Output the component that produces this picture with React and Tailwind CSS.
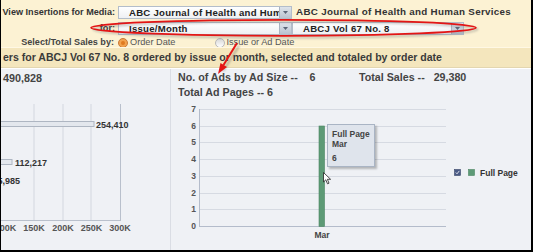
import React from "react";

function Arrow() {
  return (
    <div className="w-[12px] h-full bg-gradient-to-b from-[#dfe4eb] to-[#b9c3d0] border-l border-[#a9b3c1] flex items-center justify-center">
      <svg width="5" height="3" viewBox="0 0 5 3">
        <path d="M0 0 H5 L2.5 3 Z" fill="#5a6577" />
      </svg>
    </div>
  );
}

function Dropdown({ text, w }) {
  return (
    <div className={`${w} h-[13px] flex border border-[#b3bdca] bg-gradient-to-b from-white to-[#eef0f3] shrink-0`}>
      <div className="flex-1 overflow-hidden whitespace-nowrap pl-[10px] text-[9.6px] tracking-[0.25px] leading-[11px] font-bold text-[#222]">
        {text}
      </div>
      <Arrow />
    </div>
  );
}

export default function App() {
  return (
    <div className="relative w-[533px] h-[252px] overflow-hidden border-l border-r-2 border-b-2 border-black bg-[#eff1f5] flex flex-col font-['Liberation_Sans',Arial,sans-serif]">
      {/* header */}
      <div className="h-[47px] bg-[#fcf2d3] pt-[6px] flex flex-col">
        <div className="flex items-center h-[13px]">
          <div className="w-[114px] text-right text-[9.1px] font-bold text-[#333] whitespace-nowrap">View Insertions for Media:</div>
          <div className="ml-[3px]"><Dropdown text="ABC Journal of Health and Human Services" w="w-[174px]" /></div>
          <div className="ml-[4px] text-[9.8px] tracking-[0.3px] font-bold text-[#333] whitespace-nowrap">ABC Journal of Health and Human Services</div>
        </div>
        <div className="flex items-center h-[13px] mt-[3px]">
          <div className="w-[114px] text-right text-[9.1px] font-bold text-[#333]">for:</div>
          <div className="ml-[3px]"><Dropdown text="Issue/Month" w="w-[174px]" /></div>
          <div className="ml-[0px]"><Dropdown text="ABCJ Vol 67 No. 8" w="w-[172px]" /></div>
        </div>
        <div className="flex items-center h-[11px] mt-[2px]">
          <div className="w-[113px] text-right text-[9.1px] font-bold text-[#444] whitespace-nowrap">Select/Total Sales by:</div>
          <div className="ml-[4px] w-[10px] h-[10px] rounded-full bg-[#f2a24e] border border-[#c9793a] flex items-center justify-center">
            <div className="w-[4px] h-[4px] rounded-full bg-[#e07a20]" />
          </div>
          <div className="ml-[2px] text-[9.2px] text-[#555] whitespace-nowrap">Order Date</div>
          <div className="ml-[40px] w-[10px] h-[10px] rounded-full bg-gradient-to-b from-[#d8d8d8] to-white border border-[#b8b8b8]" />
          <div className="ml-[1px] text-[9.2px] text-[#555] whitespace-nowrap">Issue or Ad Date</div>
        </div>
      </div>
      {/* banner */}
      <div className="h-[22px] bg-[#f4e6bd] border-t border-[#fff8e4] border-b border-b-[#e3d6b0] flex items-center pl-[2px]">
        <div className="text-[10.55px] font-bold text-[#3a3a3a] whitespace-nowrap">ers for ABCJ Vol 67 No. 8 ordered by issue or month, selected and totaled by order date</div>
      </div>
      {/* panels */}
      <div className="flex-1 flex border-t border-white">
        {/* left panel */}
        <div className="w-[170px] border-r border-[#dadde4] flex flex-col">
          <div className="pl-[2px] pt-[2px] h-[31px] text-[10.8px] font-bold text-[#444] leading-[15px]">490,828</div>
          <svg width="170" height="150" className="block overflow-hidden">
            <line x1="33" y1="4" x2="33" y2="120" stroke="#d3d7df" />
            <line x1="62" y1="4" x2="62" y2="120" stroke="#d3d7df" />
            <line x1="90" y1="4" x2="90" y2="120" stroke="#d3d7df" />
            <line x1="119.5" y1="4" x2="119.5" y2="120" stroke="#b9c0cc" />
            <line x1="0" y1="120.5" x2="120" y2="120.5" stroke="#b9c0cc" />
            <rect x="-2" y="21.5" width="95" height="5" fill="#e3e7ed" stroke="#aeb6c2" />
            <text x="95" y="27.5" fontSize="9" fontWeight="bold" fill="#333">254,410</text>
            <rect x="-2" y="59.5" width="13" height="5" fill="#e3e7ed" stroke="#aeb6c2" />
            <text x="14" y="65.5" fontSize="9" fontWeight="bold" fill="#333">112,217</text>
            <text x="-3.5" y="84" fontSize="9" fontWeight="bold" fill="#333">5,985</text>
            <g fontSize="9" fontWeight="bold" fill="#555" textAnchor="middle">
              <text x="4.5" y="130.5">100K</text>
              <text x="33" y="130.5">150K</text>
              <text x="62" y="130.5">200K</text>
              <text x="90.5" y="130.5">250K</text>
              <text x="119" y="130.5">300K</text>
            </g>
          </svg>
        </div>
        {/* right panel */}
        <div className="relative flex-1 flex flex-col">
          <div className="pl-[7px] pt-[1px] h-[31px] text-[10.7px] font-bold text-[#444] leading-[15px]">
            <div className="flex">
              <span className="whitespace-pre w-[181px]">No. of Ads by Ad Size --    6</span>
              <span className="whitespace-pre">Total Sales --   29,380</span>
            </div>
            <div>Total Ad Pages -- 6</div>
          </div>
          <svg width="359" height="150" className="block">
            <g stroke="#d6dae2">
              <line x1="28" y1="9.5" x2="275" y2="9.5" />
              <line x1="28" y1="26.5" x2="275" y2="26.5" />
              <line x1="28" y1="42.5" x2="275" y2="42.5" />
              <line x1="28" y1="59.5" x2="275" y2="59.5" />
              <line x1="28" y1="76.5" x2="275" y2="76.5" />
              <line x1="28" y1="93.5" x2="275" y2="93.5" />
              <line x1="28" y1="109.5" x2="275" y2="109.5" />
            </g>
            <line x1="28" y1="126.5" x2="275" y2="126.5" stroke="#b4bccb" />
            <line x1="28.5" y1="9" x2="28.5" y2="127" stroke="#b4bccb" />
            <g fontSize="8.5" fontWeight="bold" fill="#555" textAnchor="end">
              <text x="25" y="12">7</text>
              <text x="25" y="29">6</text>
              <text x="25" y="45">5</text>
              <text x="25" y="62">4</text>
              <text x="25" y="79">3</text>
              <text x="25" y="96">2</text>
              <text x="25" y="112">1</text>
              <text x="25" y="129">0</text>
            </g>
            <rect x="148" y="26" width="5.5" height="100.5" fill="#5d9a76" stroke="#4c8563" strokeWidth="0.6" />
            <text x="151" y="137.5" fontSize="8.5" fontWeight="bold" fill="#444" textAnchor="middle">Mar</text>
            <rect x="283.5" y="69.5" width="6" height="6" fill="#4a5a86" stroke="#3a4668" strokeWidth="0.6" />
            <path d="M284.8 72.5 L286 73.8 L288.3 70.9" stroke="#fff" strokeWidth="0.8" fill="none" />
            <rect x="297.5" y="69.5" width="6" height="6" fill="#5d9a76" stroke="#4c8563" strokeWidth="0.6" />
            <text x="309" y="75.5" fontSize="8.5" fontWeight="bold" fill="#333">Full Page</text>
          </svg>
          {/* tooltip */}
          <div className="absolute left-[156px] top-[55px] w-[48px] h-[43px] bg-[#dfe4ec] border border-[#a9b4c4] shadow-[2px_2px_2px_rgba(0,0,0,0.25)] pl-[4px] pt-[4px] text-[8.5px] font-bold text-[#444] leading-[10px]">
            <div>Full Page</div>
            <div>Mar</div>
            <div className="mt-[4px]">6</div>
          </div>
          {/* cursor */}
          <svg className="absolute left-[152px] top-[103px]" width="9" height="13" viewBox="0 0 9 13">
            <path d="M0.5 0.5 L0.5 10 L2.8 7.8 L4.5 11.8 L6 11.2 L4.4 7.3 L7.6 7.3 Z" fill="#fff" stroke="#222" strokeWidth="0.8" />
          </svg>
        </div>
      </div>
      {/* annotation overlay */}
      <svg className="absolute left-0 top-0 pointer-events-none" width="532" height="250">
        <defs>
          <filter id="blur" x="-10%" y="-50%" width="120%" height="200%">
            <feGaussianBlur stdDeviation="1.2" />
          </filter>
        </defs>
        <ellipse cx="284.5" cy="29.5" rx="192" ry="8" fill="none" stroke="#777" strokeWidth="2" opacity="0.45" filter="url(#blur)" />
        <ellipse cx="282.5" cy="27.8" rx="192.5" ry="8" fill="none" stroke="#e31515" strokeWidth="1.8" />
        <g opacity="0.4" filter="url(#blur)">
          <line x1="238" y1="46" x2="222" y2="71" stroke="#555" strokeWidth="2" />
        </g>
        <line x1="236" y1="43" x2="222.5" y2="65" stroke="#e31515" strokeWidth="2" />
        <path d="M217 74 L219.5 63 L226 67 Z" fill="#e31515" />
      </svg>
    </div>
  );
}
